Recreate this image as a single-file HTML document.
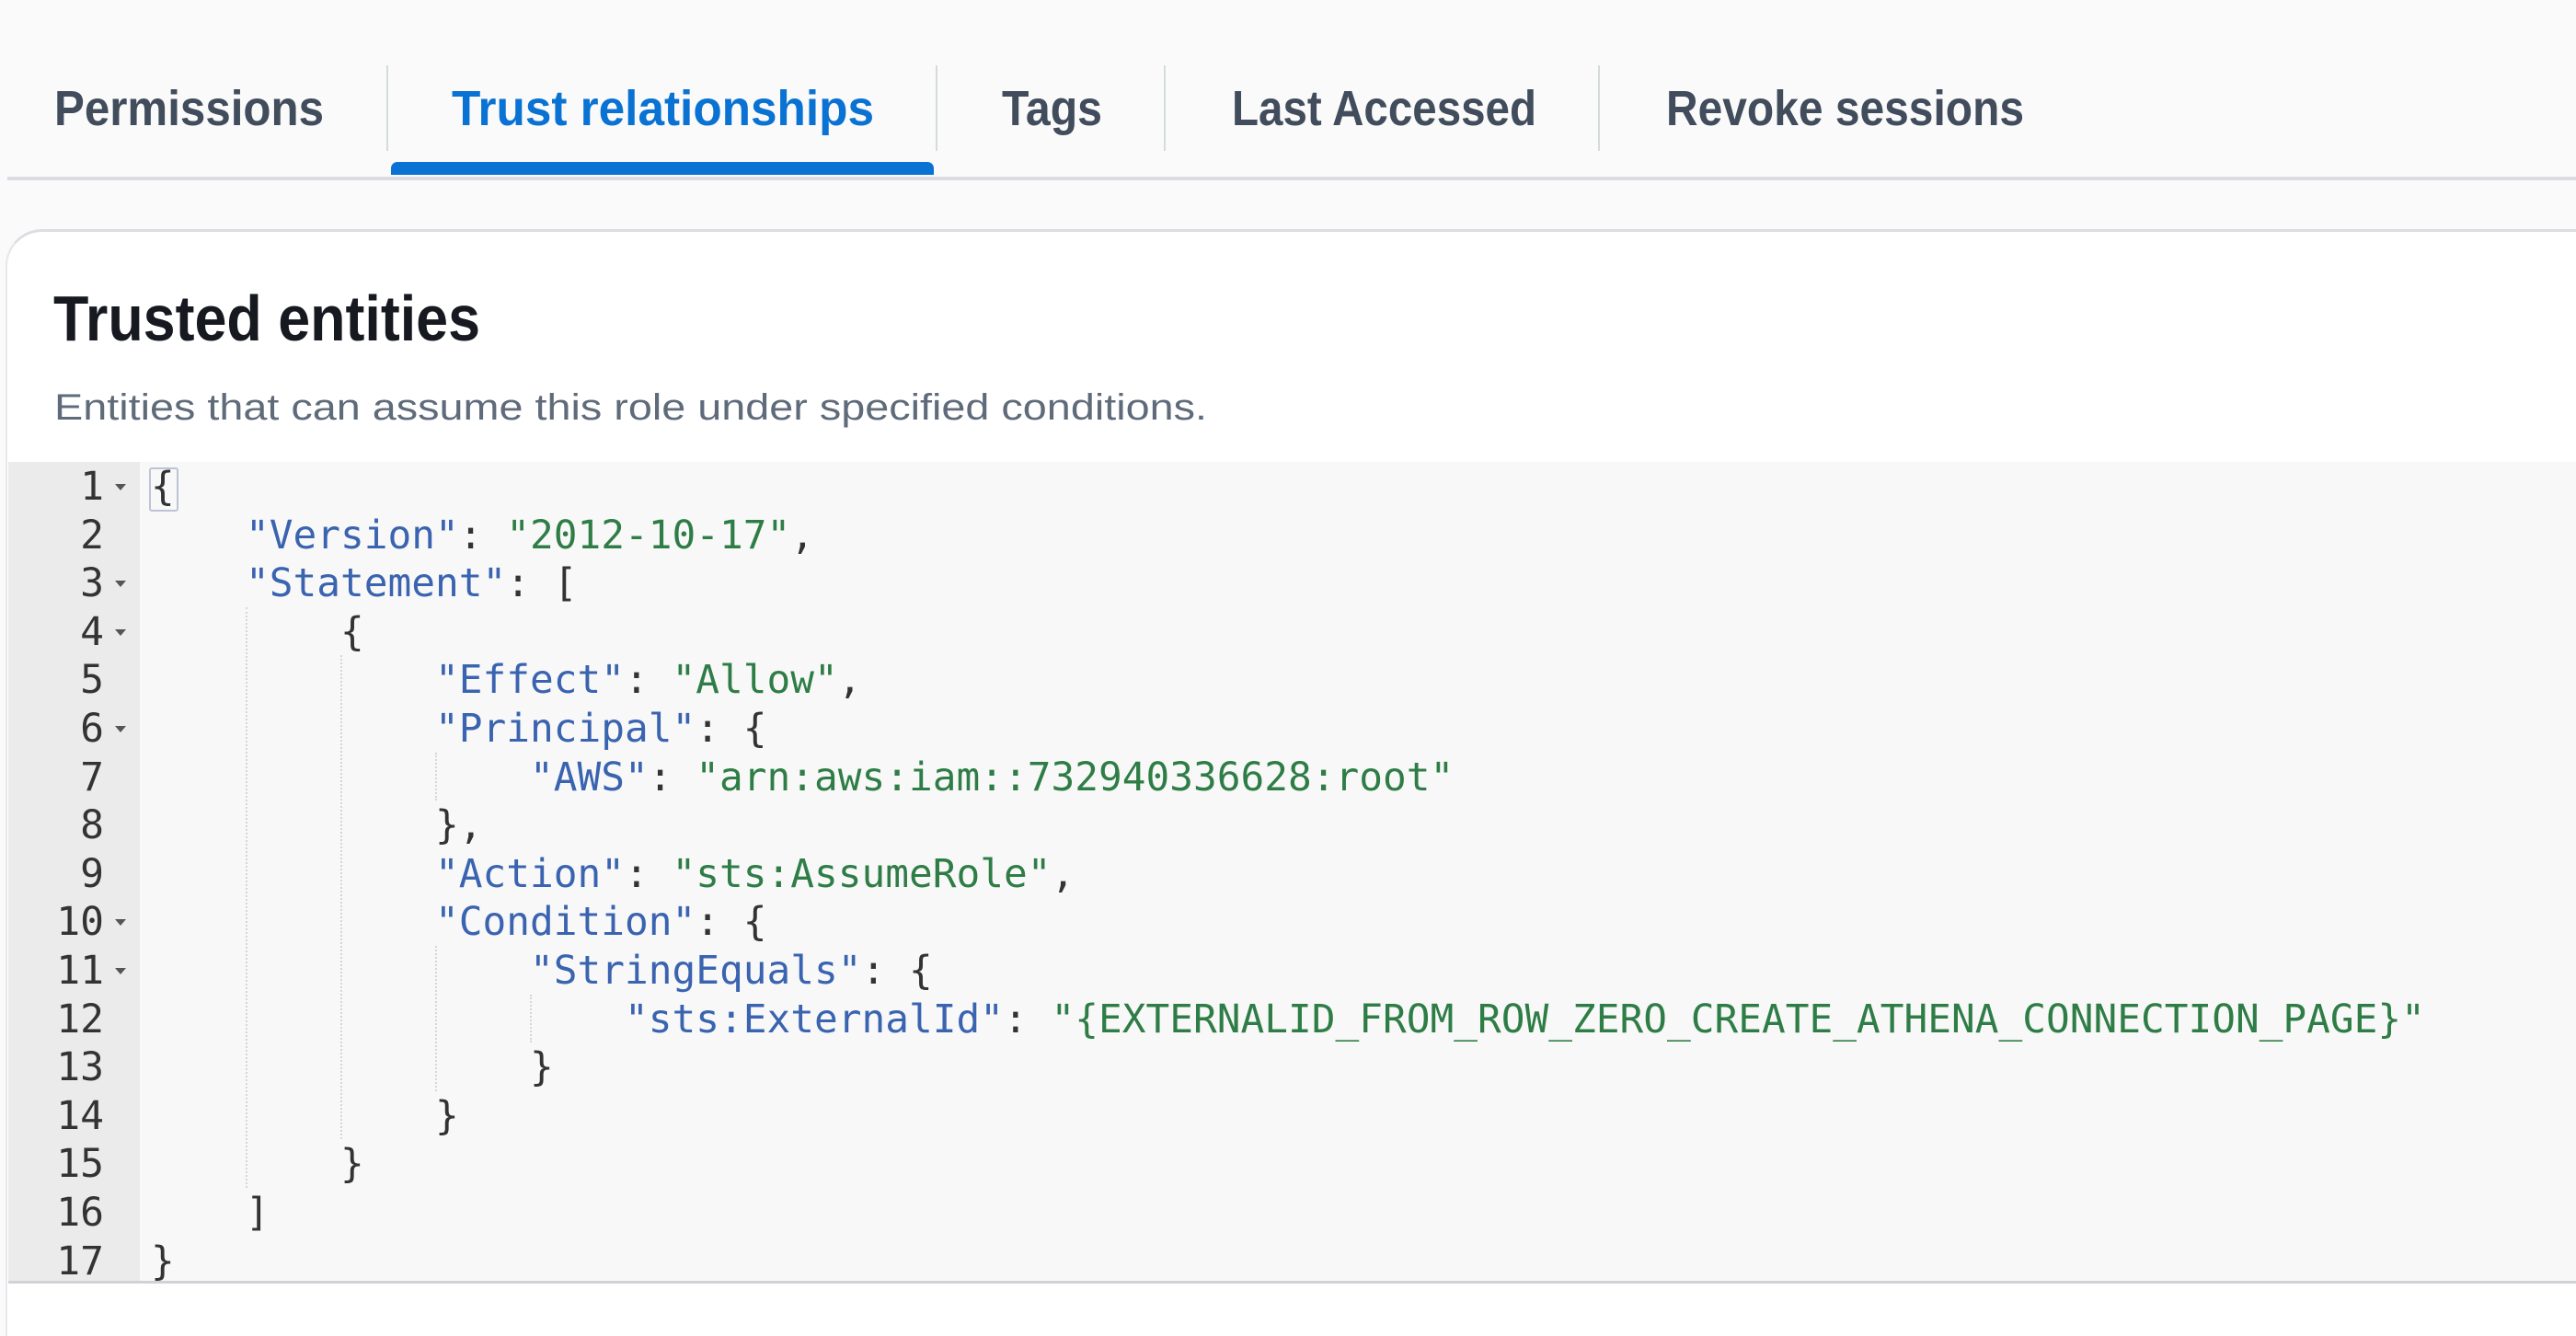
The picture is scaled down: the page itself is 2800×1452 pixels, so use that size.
<!DOCTYPE html>
<html><head><meta charset="utf-8">
<style>
html,body{margin:0;padding:0;}
body{width:2800px;height:1415px;position:relative;overflow:hidden;background:#fafafa;font-family:"Liberation Sans",sans-serif;}
.abs{position:absolute;white-space:nowrap;}
.tab{position:absolute;top:86px;font-weight:bold;font-size:54px;line-height:64px;color:#414d5c;transform-origin:0 0;}
.sep{position:absolute;top:71px;width:2px;height:93px;background:#d5dbdb;}
.fit{display:inline-block;transform-origin:0 0;}
.code{position:absolute;left:9px;top:502px;width:2791px;height:890px;background:#f8f8f8;border-bottom:3px solid #d0d2d6;}
.gut{position:absolute;left:0;top:0;width:143px;height:890px;background:#ebebeb;}
.ln{position:absolute;font-family:"DejaVu Sans Mono","Liberation Mono",monospace;font-size:43px;line-height:52.6px;height:52.6px;white-space:pre;color:#333;}
.num{text-align:right;width:104px;left:0;}
.k{color:#3a63b0}.s{color:#2f7d46}
.fold{position:absolute;width:0;height:0;border-left:6px solid transparent;border-right:6px solid transparent;border-top:7px solid #555;}
.guide{position:absolute;width:0;border-left:2px dotted #d6d6d6;}
</style></head><body>
<div class="tab" style="left:59px"><span class="fit" data-w="293">Permissions</span></div>
<div class="sep" style="left:420px"></div>
<div class="tab" style="left:491px;color:#0972d3"><span class="fit" data-w="459">Trust relationships</span></div>
<div class="sep" style="left:1017px"></div>
<div class="tab" style="left:1089px"><span class="fit" data-w="109">Tags</span></div>
<div class="sep" style="left:1265px"></div>
<div class="tab" style="left:1339px"><span class="fit" data-w="331">Last Accessed</span></div>
<div class="sep" style="left:1737px"></div>
<div class="tab" style="left:1811px"><span class="fit" data-w="389">Revoke sessions</span></div>
<div class="abs" style="left:8px;top:192px;width:2792px;height:4px;background:#dcdde2"></div>
<div class="abs" style="left:425px;top:176px;width:590px;height:14px;background:#0972d3;border-radius:7px 7px 0 0"></div>
<div class="abs" style="left:6px;top:249px;width:2820px;height:1200px;background:#fff;border-top:3px solid #dcdde2;border-left:2px solid #e6e7ea;border-radius:40px 0 0 0"></div>
<div class="abs" style="left:58px;top:306px;font-weight:bold;font-size:70px;line-height:80px;color:#16191f"><span class="fit" data-w="464">Trusted entities</span></div>
<div class="abs" style="left:59px;top:418px;font-size:40px;line-height:50px;color:#5f6b7a"><span class="fit" data-w="1253">Entities that can assume this role under specified conditions.</span></div>
<div class="code">
<div class="gut"></div>
<div class="abs" style="left:153px;top:6px;width:28px;height:44px;border:2px solid #bfc3d6;border-radius:3px"></div>
<div id="lines"></div>
</div>
<script>
var L=[
['{'],
['    ','k"Version"',': ','s"2012-10-17"',','],
['    ','k"Statement"',': ['],
['        {'],
['            ','k"Effect"',': ','s"Allow"',','],
['            ','k"Principal"',': {'],
['                ','k"AWS"',': ','s"arn:aws:iam::732940336628:root"'],
['            },'],
['            ','k"Action"',': ','s"sts:AssumeRole"',','],
['            ','k"Condition"',': {'],
['                ','k"StringEquals"',': {'],
['                    ','k"sts:ExternalId"',': ','s"{EXTERNALID_FROM_ROW_ZERO_CREATE_ATHENA_CONNECTION_PAGE}"'],
['                }'],
['            }'],
['        }'],
['    ]'],
['}']];
var folds=[1,3,4,6,10,11];
var h='';var lh=52.6;
for(var i=0;i<L.length;i++){
 var y=(i*lh+1).toFixed(1);
 h+='<div class="ln num" style="top:'+y+'px">'+(i+1)+'</div>';
 if(folds.indexOf(i+1)>=0)h+='<div class="fold" style="left:116px;top:'+(i*lh+24).toFixed(1)+'px"></div>';
 var t='';
 L[i].forEach(function(p){
  if(p[0]=='k'&&p[1]=='"')t+='<span class="k">'+p.slice(1)+'</span>';
  else if(p[0]=='s'&&p[1]=='"')t+='<span class="s">'+p.slice(1)+'</span>';
  else t+=p;});
 h+='<div class="ln" style="left:155px;top:'+y+'px">'+t+'</div>';
}
var cw=25.75;
function g(x,a,b){h+='<div class="guide" style="left:'+(155+x*cw)+'px;top:'+(a*lh)+'px;height:'+((b-a)*lh)+'px"></div>';}
g(4,3,15);g(8,4,14);g(12,6,7);g(12,10,13);g(16,11,12);
document.getElementById('lines').innerHTML=h;
var cws=document.querySelectorAll('.ln:not(.num)');
var probe=document.createElement('span');probe.className='ln';probe.style.position='absolute';probe.style.visibility='hidden';probe.textContent='0000000000';document.body.appendChild(probe);
var w=probe.getBoundingClientRect().width/10;probe.remove();
if(w>0){cws.forEach(function(e){e.style.transformOrigin='0 0';e.style.transform='scaleX('+(cw/w)+')';});}
document.querySelectorAll('.fit').forEach(function(e){var t=+e.getAttribute('data-w');var r=e.getBoundingClientRect().width;if(r>0)e.style.transform='scaleX('+(t/r)+')';});
</script>
</body></html>
